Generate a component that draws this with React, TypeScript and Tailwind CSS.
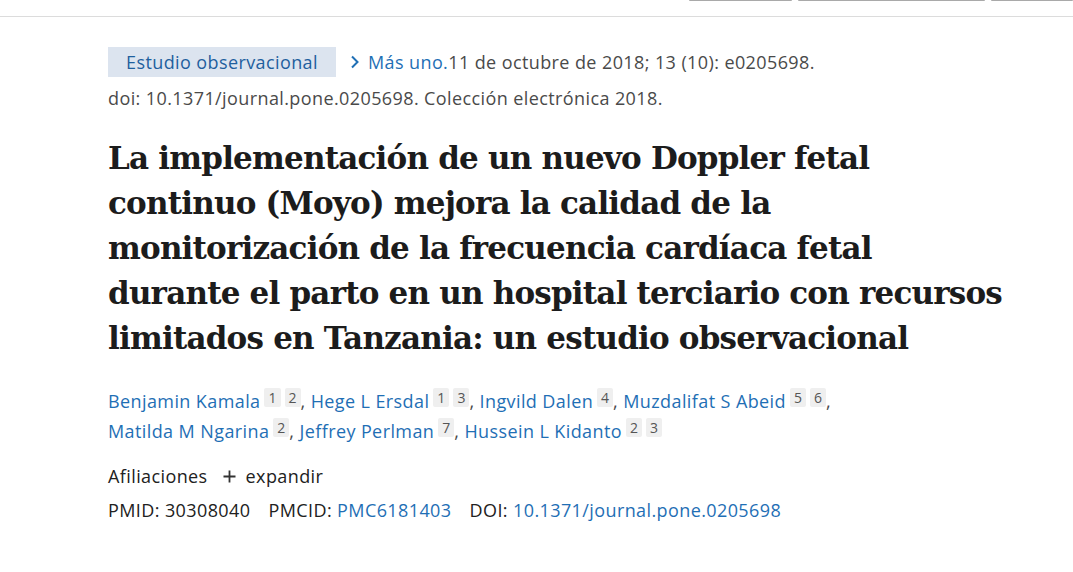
import React from 'react';

const sans = "font-['Open_Sans','Noto_Sans',sans-serif]";

interface Author {
  name: string;
  refs: number[];
}

const authors: Author[][] = [
  [
    { name: 'Benjamin Kamala', refs: [1, 2] },
    { name: 'Hege L Ersdal', refs: [1, 3] },
    { name: 'Ingvild Dalen', refs: [4] },
    { name: 'Muzdalifat S Abeid', refs: [5, 6] },
  ],
  [
    { name: 'Matilda M Ngarina', refs: [2] },
    { name: 'Jeffrey Perlman', refs: [7] },
    { name: 'Hussein L Kidanto', refs: [2, 3] },
  ],
];

const titleLines = [
  'La implementación de un nuevo Doppler fetal',
  'continuo (Moyo) mejora la calidad de la',
  'monitorización de la frecuencia cardíaca fetal',
  'durante el parto en un hospital terciario con recursos',
  'limitados en Tanzania: un estudio observacional',
];

function Ref({ n }: { n: number }) {
  return (
    <span className="ml-[4px] inline-block rounded-[2px] bg-[#efefef] px-[4px] text-[14px] leading-[19px] tracking-normal text-[#555] align-[5px]">
      {n}
    </span>
  );
}

export default function App() {
  return (
    <div className={`min-h-[572px] w-full bg-white ${sans} text-[#212121]`}>
      <div className="relative h-[17px] border-b border-[#dcdcdc]">
        <div className="absolute right-0 top-0 flex gap-[6px]">
          <div className="h-[1px] w-[103px] rounded-b bg-[#a9a9a9]" />
          <div className="h-[1px] w-[187px] rounded-b bg-[#a9a9a9]" />
          <div className="h-[1px] w-[82px] rounded-b bg-[#a9a9a9]" />
        </div>
      </div>

      <main className="pl-[108px] pr-[40px] pt-[30px] text-[18px] tracking-[0.4px]">
        <div className="flex items-center leading-[30px]">
          <span className="bg-[#dce4ef] px-[18px] text-[#1f5f9e]">Estudio observacional</span>
          <svg className="ml-[14px] mr-[8px] h-[14px] w-[10px] text-[#1f6fb5]" viewBox="0 0 10 14" fill="none">
            <path d="M2 1.5 L7.5 7 L2 12.5" stroke="currentColor" strokeWidth="2" />
          </svg>
          <span className="text-[#1f6fb5]">Más uno.</span>
          <span className="text-[#4a4a4a]">11 de octubre de 2018; 13 (10): e0205698.</span>
        </div>
        <p className="mt-[9px] leading-[24px] text-[#4a4a4a]">
          doi: 10.1371/journal.pone.0205698. Colección electrónica 2018.
        </p>

        <h1 className="mt-[26px] font-['DejaVu_Serif','Liberation_Serif',serif] text-[31px] font-bold leading-[45px] tracking-[-0.8px] text-[#1c1c1c]">
          {titleLines.map((l) => (
            <span key={l} className="block whitespace-nowrap">
              {l}
            </span>
          ))}
        </h1>

        <div className="mt-[25px] leading-[30px]">
          {authors.map((row, ri) => (
            <div key={ri} className="whitespace-nowrap">
              {row.map((a, i) => (
                <span key={a.name}>
                  <a className="text-[#1f6fb5]">{a.name}</a>
                  {a.refs.map((r) => (
                    <Ref key={r} n={r} />
                  ))}
                  {(i < row.length - 1 || ri === 0) && <span className="text-[#4a4a4a]">, </span>}
                </span>
              ))}
            </div>
          ))}
        </div>

        <div className="mt-[15px] flex items-center leading-[30px] text-[#212121]">
          <span>Afiliaciones</span>
          <svg className="ml-[15px] mr-[10px] h-[13px] w-[13px]" viewBox="0 0 13 13">
            <path d="M6.5 0.5 V12.5 M0.5 6.5 H12.5" stroke="#333" strokeWidth="1.8" />
          </svg>
          <span>expandir</span>
        </div>
        <div className="mt-[4px] flex leading-[30px] text-[#212121]">
          <span>PMID: 30308040</span>
          <span className="ml-[18px]">
            PMCID: <a className="text-[#1f6fb5]">PMC6181403</a>
          </span>
          <span className="ml-[18px]">
            DOI: <a className="text-[#1f6fb5]">10.1371/journal.pone.0205698</a>
          </span>
        </div>
      </main>
    </div>
  );
}
